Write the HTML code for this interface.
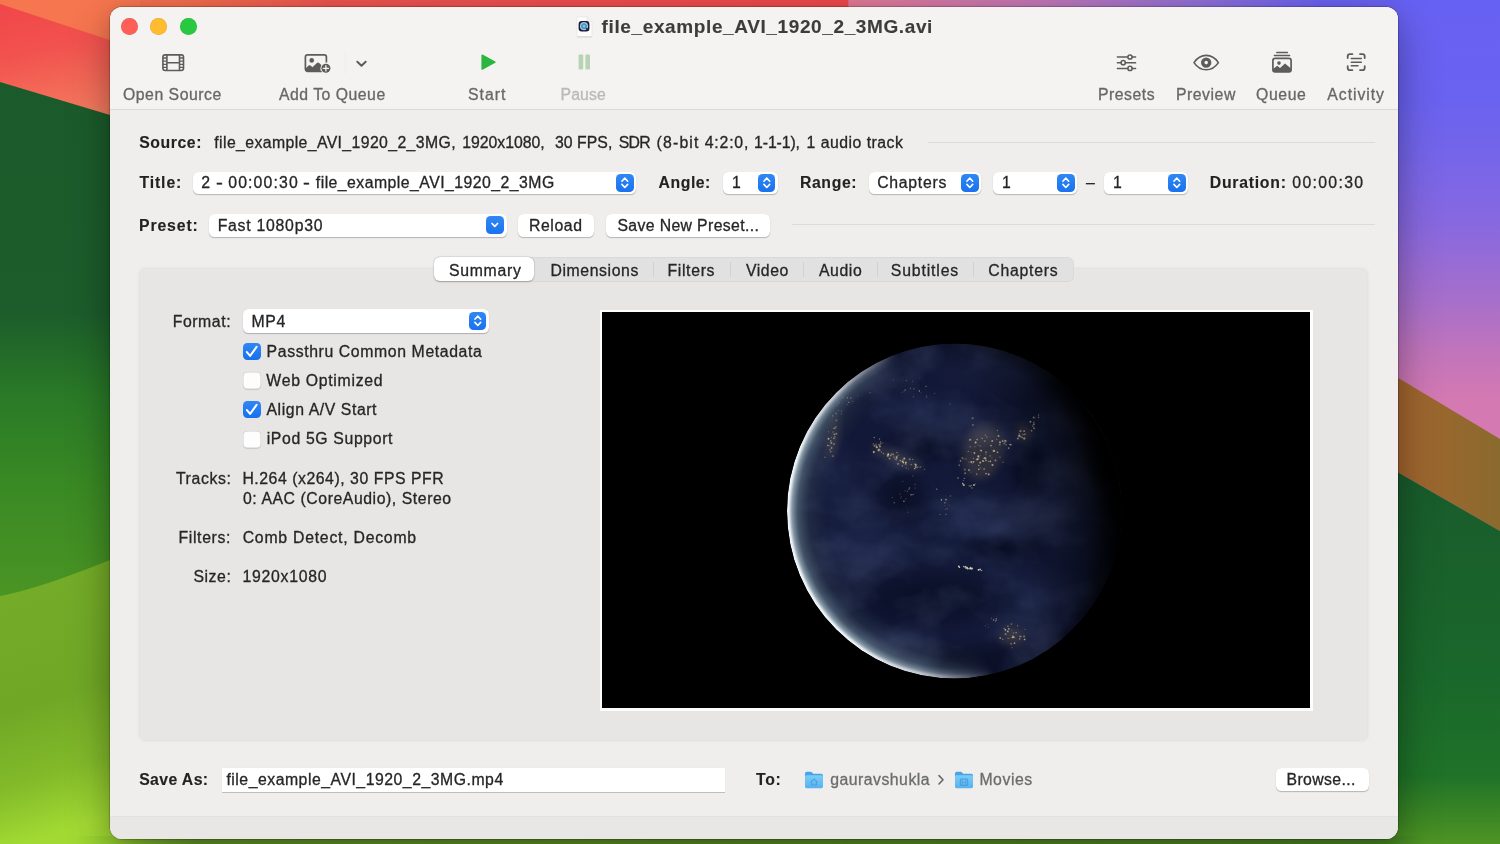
<!DOCTYPE html>
<html><head><meta charset="utf-8"><title>HandBrake</title>
<style>
html,body{margin:0;padding:0;}
body{width:1500px;height:844px;overflow:hidden;position:relative;background:#1b5b2b;font-family:"Liberation Sans", sans-serif;}
.t{position:absolute;white-space:pre;font-size:15.8px;line-height:20px;font-family:"Liberation Sans", sans-serif;-webkit-text-stroke:0.3px currentColor;}
.abs{position:absolute;}

.win{position:absolute;left:110px;top:7px;width:1287.5px;height:831.5px;border-radius:12px;background:#efeeed;overflow:hidden;
 box-shadow:0 0 0 0.5px rgba(0,0,0,.30), 0 18px 44px rgba(0,0,0,.30), 0 2px 22px rgba(0,0,0,.10), 0 0 3px rgba(0,0,0,.12);}
.tbar{position:absolute;left:0;top:0;width:100%;height:102px;background:#f4f3f2;border-bottom:1px solid #dad9d8;}
.bbar{position:absolute;left:0;top:808.5px;width:100%;height:23px;background:#e8e7e6;border-top:1px solid #e2e1e0;}
.tl{position:absolute;top:11.5px;width:17px;height:17px;border-radius:50%;}
.sel{position:absolute;background:#fff;border-radius:5.5px;box-shadow:0 0.8px 1.1px -0.2px rgba(0,0,0,.24),0 0 0.6px rgba(0,0,0,.10);}
.btn{position:absolute;background:#fff;border-radius:5.5px;box-shadow:0 0.8px 1.1px -0.2px rgba(0,0,0,.24),0 0 0.6px rgba(0,0,0,.10);}
.stp{position:absolute;width:17.6px;height:17.6px;border-radius:4.6px;background:linear-gradient(#3088f5,#1a72ee);}
.cb{position:absolute;left:243.2px;width:17.5px;height:17.2px;border-radius:4.4px;}
.cb.on{background:linear-gradient(#3088f5,#1770ee);}
.cb.off{background:#fdfdfd;box-shadow:inset 0 0 0 0.5px rgba(0,0,0,.18),0 0.5px 1px rgba(0,0,0,.12);}
.hl{position:absolute;height:1px;background:#dcdbda;}

</style></head><body>

<svg class="abs" style="left:0;top:0" width="1500" height="844" viewBox="0 0 1500 844">
<defs>
 <linearGradient id="gL" x1="0" y1="0" x2="0" y2="1">
  <stop offset="0" stop-color="#1b5a2b"/><stop offset="0.37" stop-color="#1c5d2b"/>
  <stop offset="0.47" stop-color="#2a7a27"/><stop offset="0.58" stop-color="#3a8a24"/>
  <stop offset="0.70" stop-color="#4a9424"/><stop offset="1" stop-color="#4a9424"/>
 </linearGradient>
 <linearGradient id="gLL" x1="0" y1="0" x2="0.15" y2="1">
  <stop offset="0" stop-color="#76ad29"/><stop offset="0.55" stop-color="#70a826"/><stop offset="0.8" stop-color="#82ba2a"/><stop offset="1" stop-color="#a2da33"/>
 </linearGradient>
 <linearGradient id="gRed" x1="0" y1="0" x2="0.25" y2="1">
  <stop offset="0" stop-color="#f1454a"/><stop offset="0.45" stop-color="#f2524e"/><stop offset="1" stop-color="#f47a5e"/>
 </linearGradient>
 <linearGradient id="gTop" x1="0" y1="0" x2="1" y2="0">
  <stop offset="0" stop-color="#f5744f"/><stop offset="0.12" stop-color="#f3704e"/><stop offset="0.22" stop-color="#ee5550"/>
  <stop offset="0.565" stop-color="#ee494b"/><stop offset="0.566" stop-color="#e47a96"/>
  <stop offset="0.70" stop-color="#c078b8"/><stop offset="0.80" stop-color="#9070d8"/><stop offset="0.88" stop-color="#6a62f0"/><stop offset="1" stop-color="#6a62f0"/>
 </linearGradient>
 <linearGradient id="gR" x1="0" y1="0" x2="0" y2="1">
  <stop offset="0" stop-color="#6761f3"/><stop offset="0.18" stop-color="#6a62f0"/><stop offset="0.27" stop-color="#7465ea"/>
  <stop offset="0.40" stop-color="#8868e0"/><stop offset="0.535" stop-color="#a66fcb"/><stop offset="0.625" stop-color="#c074bb"/><stop offset="0.714" stop-color="#d479b2"/><stop offset="1" stop-color="#d87ab0"/>
 </linearGradient>
 <linearGradient id="gBr" x1="0" y1="0" x2="1" y2="0">
  <stop offset="0" stop-color="#a8642f"/><stop offset="1" stop-color="#8a6a2e"/>
 </linearGradient>
 <linearGradient id="gRG" x1="0" y1="0" x2="0" y2="1">
  <stop offset="0" stop-color="#195b2c"/><stop offset="0.55" stop-color="#1a672b"/><stop offset="0.82" stop-color="#1f7228"/><stop offset="1" stop-color="#4f9423"/>
 </linearGradient>
 <linearGradient id="gBot" x1="0" y1="0" x2="1" y2="0">
  <stop offset="0.05" stop-color="#8fca2e" stop-opacity="0"/><stop offset="0.075" stop-color="#96d030"/><stop offset="0.13" stop-color="#6a9c2a"/>
  <stop offset="0.5" stop-color="#5f9026"/><stop offset="0.9" stop-color="#4f8a26"/><stop offset="0.925" stop-color="#468624"/><stop offset="0.95" stop-color="#438524" stop-opacity="0"/>
 </linearGradient>
 <filter id="b3" x="-10%" y="-10%" width="120%" height="120%"><feGaussianBlur stdDeviation="3"/></filter>
</defs>
<rect width="1500" height="844" fill="#1b5a2b"/>
<!-- left column -->
<rect x="0" y="0" width="140" height="844" fill="url(#gL)"/>
<path d="M0,596 C40,588 80,572 140,548 L140,844 L0,844 Z" fill="url(#gLL)"/>
<!-- top band -->
<rect x="0" y="0" width="1500" height="14" fill="url(#gTop)"/>
<!-- top-left red / orange -->
<polygon points="0,0 140,0 140,124 0,82" fill="url(#gRed)"/>
<polygon points="0,0 140,0 140,50 0,4" fill="#f5764f"/>
<!-- right column -->
<rect x="1380" y="0" width="120" height="560" fill="url(#gR)"/>
<polygon points="1380,367 1500,439 1500,531 1380,462" fill="url(#gBr)"/>
<polygon points="1380,462 1500,531 1500,844 1380,844" fill="url(#gRG)"/>
<!-- bottom band -->
<rect x="0" y="836" width="1500" height="8" fill="url(#gBot)"/>
</svg>


<div class="win">
 <div class="tbar"></div>
 <div class="bbar"></div>
</div>
<div class="tl" style="left:121.2px;top:18px;background:#fe5f57;box-shadow:inset 0 0 0 0.5px rgba(0,0,0,.12)"></div>
<div class="tl" style="left:150.3px;top:18px;background:#febc2e;box-shadow:inset 0 0 0 0.5px rgba(0,0,0,.12)"></div>
<div class="tl" style="left:179.5px;top:18px;background:#28c840;box-shadow:inset 0 0 0 0.5px rgba(0,0,0,.12)"></div>
<svg class="abs" style="left:575.5px;top:15.5px" width="17" height="22" viewBox="0 0 17 22">
<defs><radialGradient id="qt" cx="0.5" cy="0.5" r="0.5"><stop offset="0" stop-color="#c2f0fb"/><stop offset="0.3" stop-color="#5aa3cc"/><stop offset="0.62" stop-color="#4a8dbd"/><stop offset="0.8" stop-color="#a9c9ea"/><stop offset="1" stop-color="#8fb4dc"/></radialGradient></defs>
<path d="M0.9 1.6 Q0.9 0.7 1.8 0.7 H11 L16 5.6 V20 Q16 20.9 15.1 20.9 H1.8 Q0.9 20.9 0.9 20 Z" fill="#fcfcfb" stroke="#e4e3e2" stroke-width="0.7"/>
<path d="M1.2 20.9 H15.8" stroke="#cfcecd" stroke-width="0.9"/>
<path d="M11 0.7 V4.6 Q11 5.6 12 5.6 H16" fill="#f1f0ef" stroke="#e0dfde" stroke-width="0.5"/>
<rect x="2.6" y="4.9" width="10.8" height="10.5" rx="3.2" fill="#1b1a33"/>
<circle cx="8" cy="10.2" r="4.1" fill="url(#qt)"/>
<path d="M10.6 12.8 L12 14.2" stroke="#1b2a3a" stroke-width="1.6" stroke-linecap="round"/>
</svg>

<svg class="abs" style="left:0;top:0;overflow:visible" width="1500" height="120" viewBox="0 0 1500 120">
<!-- film -->
<g fill="none" stroke="#5c5c5c" stroke-width="1.6">
 <rect x="162.9" y="54.9" width="20.6" height="15.6" rx="2.2"/>
 <path d="M166.9 54.9 V70.5 M179.5 54.9 V70.5 M166.9 62.7 H179.5"/>
 <path d="M162.9 58.0 H166.9 M162.9 61.1 H166.9 M162.9 64.3 H166.9 M162.9 67.4 H166.9 M179.5 58.0 H183.5 M179.5 61.1 H183.5 M179.5 64.3 H183.5 M179.5 67.4 H183.5" stroke-width="1.3"/>
</g>
<!-- add to queue: photo + badge -->
<g>
 <path d="M322 71.3 H307.6 A2.2 2.2 0 0 1 305.4 69.1 V57 A2.2 2.2 0 0 1 307.6 54.8 H324.2 A2.2 2.2 0 0 1 326.4 57 V62.6" fill="none" stroke="#5c5c5c" stroke-width="1.7"/>
 <circle cx="311.7" cy="60.4" r="2.3" fill="#5c5c5c"/>
 <path d="M305.6 68.4 L308.6 65.6 Q309.6 64.8 310.6 65.6 L312.4 67.2 L316.9 63.0 Q318 62.1 319.1 63.0 L321.6 65.2 L320.3 71.2 L307.2 71.2 Q305.6 71.2 305.6 69.6 Z" fill="#5c5c5c"/>
 <circle cx="325.9" cy="68.3" r="5.4" fill="#f4f3f2"/>
 <circle cx="325.9" cy="68.3" r="4.5" fill="#5c5c5c"/>
 <path d="M325.9 65.7 V70.9 M323.3 68.3 H328.5" stroke="#f4f3f2" stroke-width="1.3" stroke-linecap="round"/>
</g>
<rect x="344.6" y="52" width="1" height="22" fill="#eeedec"/>
<path d="M357.3 61.8 L361.5 65.8 L365.7 61.8" fill="none" stroke="#5c5c5c" stroke-width="2" stroke-linecap="round" stroke-linejoin="round"/>
<!-- play -->
<path d="M482.2 55.2 L494.9 62.1 L482.2 69.0 Z" fill="#2ab640" stroke="#2ab640" stroke-width="1.6" stroke-linejoin="round"/>
<!-- pause -->
<rect x="578.6" y="54.6" width="4.6" height="15" rx="1" fill="#b7d3b4"/>
<rect x="585.4" y="54.6" width="4.6" height="15" rx="1" fill="#b7d3b4"/>
<!-- presets sliders -->
<g fill="none" stroke="#5c5c5c" stroke-width="1.5" stroke-linecap="round">
 <path d="M1117.4 57 H1127.8 M1132.2 57 H1135.6 M1117.4 62.7 H1121 M1125.4 62.7 H1135.6 M1117.4 68.4 H1127.8 M1132.2 68.4 H1135.6"/>
 <circle cx="1130" cy="57" r="2.1"/><circle cx="1123.2" cy="62.7" r="2.1"/><circle cx="1130" cy="68.4" r="2.1"/>
</g>
<!-- eye -->
<g>
 <path d="M1194 62.6 C1197.5 57.4 1201.6 55.4 1206.2 55.4 C1210.8 55.4 1214.9 57.4 1218.4 62.6 C1214.9 67.8 1210.8 69.8 1206.2 69.8 C1201.6 69.8 1197.5 67.8 1194 62.6 Z" fill="none" stroke="#5c5c5c" stroke-width="1.6" stroke-linejoin="round"/>
 <circle cx="1206.2" cy="62.6" r="3.5" fill="none" stroke="#5c5c5c" stroke-width="3.4"/>
</g>
<!-- queue stack -->
<g>
 <path d="M1276.8 52.6 H1287.4 M1274.4 55.4 H1289.6" stroke="#5c5c5c" stroke-width="1.5" stroke-linecap="round" fill="none"/>
 <rect x="1272.9" y="58.4" width="18.2" height="13.5" rx="2.2" fill="none" stroke="#5c5c5c" stroke-width="1.7"/>
 <circle cx="1279" cy="63.1" r="1.8" fill="#5c5c5c"/>
 <path d="M1273 69 L1277.2 65.8 L1280 68 L1285 63.6 L1291 68.6 L1291 71.8 L1273 71.8 Z" fill="#5c5c5c"/>
</g>
<!-- activity: text viewfinder -->
<g fill="none" stroke="#5c5c5c" stroke-width="1.8" stroke-linecap="round">
 <path d="M1347.7 58 V56.3 A2.2 2.2 0 0 1 1349.9 54.1 H1352.4 M1360 54.1 H1362.5 A2.2 2.2 0 0 1 1364.7 56.3 V58 M1364.7 66.2 V67.9 A2.2 2.2 0 0 1 1362.5 70.1 H1360 M1352.4 70.1 H1349.9 A2.2 2.2 0 0 1 1347.7 67.9 V66.2"/>
 <path d="M1351.3 58.6 H1361.3 M1351.3 62.2 H1361.3 M1351.3 65.8 H1358" stroke-width="1.5"/>
</g>
</svg>

<!-- separators -->
<div class="hl" style="left:928px;top:142px;width:447px"></div>
<div class="hl" style="left:792px;top:224px;width:583px"></div>
<!-- row 2 controls -->
<div class="sel" style="left:193px;top:171.5px;width:443px;height:22.5px"></div><div class="stp" style="left:616.2px;top:174px"><svg width="17.6" height="17.6" viewBox="0 0 17.6 17.6" style="display:block"><path d="M5.9 7.2 L8.8 4.1 L11.7 7.2 M5.9 10.4 L8.8 13.5 L11.7 10.4" fill="none" stroke="#fff" stroke-width="1.6" stroke-linecap="round" stroke-linejoin="round"/></svg></div>
<div class="sel" style="left:723px;top:171.5px;width:55px;height:22.5px"></div><div class="stp" style="left:757.8px;top:174px"><svg width="17.6" height="17.6" viewBox="0 0 17.6 17.6" style="display:block"><path d="M5.9 7.2 L8.8 4.1 L11.7 7.2 M5.9 10.4 L8.8 13.5 L11.7 10.4" fill="none" stroke="#fff" stroke-width="1.6" stroke-linecap="round" stroke-linejoin="round"/></svg></div>
<div class="sel" style="left:869px;top:171.5px;width:111.5px;height:22.5px"></div><div class="stp" style="left:961.2px;top:174px"><svg width="17.6" height="17.6" viewBox="0 0 17.6 17.6" style="display:block"><path d="M5.9 7.2 L8.8 4.1 L11.7 7.2 M5.9 10.4 L8.8 13.5 L11.7 10.4" fill="none" stroke="#fff" stroke-width="1.6" stroke-linecap="round" stroke-linejoin="round"/></svg></div>
<div class="sel" style="left:993px;top:171.5px;width:84px;height:22.5px"></div><div class="stp" style="left:1057.2px;top:174px"><svg width="17.6" height="17.6" viewBox="0 0 17.6 17.6" style="display:block"><path d="M5.9 7.2 L8.8 4.1 L11.7 7.2 M5.9 10.4 L8.8 13.5 L11.7 10.4" fill="none" stroke="#fff" stroke-width="1.6" stroke-linecap="round" stroke-linejoin="round"/></svg></div>
<div class="sel" style="left:1104px;top:171.5px;width:83.5px;height:22.5px"></div><div class="stp" style="left:1168.2px;top:174px"><svg width="17.6" height="17.6" viewBox="0 0 17.6 17.6" style="display:block"><path d="M5.9 7.2 L8.8 4.1 L11.7 7.2 M5.9 10.4 L8.8 13.5 L11.7 10.4" fill="none" stroke="#fff" stroke-width="1.6" stroke-linecap="round" stroke-linejoin="round"/></svg></div>
<!-- row 3 controls -->
<div class="sel" style="left:209px;top:213.5px;width:297.5px;height:23px"></div><div class="stp" style="left:486.2px;top:216.2px"><svg width="17.6" height="17.6" viewBox="0 0 17.6 17.6" style="display:block"><path d="M6 7.5 L8.8 10.3 L11.6 7.5" fill="none" stroke="#fff" stroke-width="1.7" stroke-linecap="round" stroke-linejoin="round"/></svg></div>
<div class="btn" style="left:518px;top:213.5px;width:75.5px;height:23px"></div>
<div class="btn" style="left:606px;top:213.5px;width:163.5px;height:23px"></div>
<!-- tab box -->
<div class="abs" style="left:139px;top:268px;width:1229px;height:473px;border-radius:7px;background:#e7e6e5;box-shadow:0 0 2.5px 0.5px #e8e7e6, inset 0 0 0 1px rgba(0,0,0,.012)"></div>
<!-- segmented control -->
<div class="abs" style="left:433.5px;top:256.5px;width:640px;height:25.5px;border-radius:7px;background:#e2e1e1;box-shadow:inset 0 0 0 0.5px rgba(0,0,0,.07)"></div>
<div class="abs" style="left:434.3px;top:257.2px;width:100.2px;height:24px;border-radius:6px;background:#fff;box-shadow:0 0.5px 1.8px rgba(0,0,0,.26),0 0 0 0.5px rgba(0,0,0,.06)"></div>
<div class="abs" style="left:653px;top:262px;width:1px;height:15px;background:#d2d1d1"></div>
<div class="abs" style="left:730px;top:262px;width:1px;height:15px;background:#d2d1d1"></div>
<div class="abs" style="left:803px;top:262px;width:1px;height:15px;background:#d2d1d1"></div>
<div class="abs" style="left:876.5px;top:262px;width:1px;height:15px;background:#d2d1d1"></div>
<div class="abs" style="left:973px;top:262px;width:1px;height:15px;background:#d2d1d1"></div>
<!-- format -->
<div class="sel" style="left:243px;top:309px;width:246px;height:23.5px"></div><div class="stp" style="left:468.6px;top:312.2px"><svg width="17.6" height="17.6" viewBox="0 0 17.6 17.6" style="display:block"><path d="M5.9 7.2 L8.8 4.1 L11.7 7.2 M5.9 10.4 L8.8 13.5 L11.7 10.4" fill="none" stroke="#fff" stroke-width="1.6" stroke-linecap="round" stroke-linejoin="round"/></svg></div>
<div class="cb on" style="top:343px"><svg width="17.5" height="17.2" viewBox="0 0 17.5 17.2" style="display:block"><path d="M3.9 9.1 L7.1 12.9 L13.6 3.9" fill="none" stroke="#fff" stroke-width="2" stroke-linecap="round" stroke-linejoin="round"/></svg></div><div class="cb off" style="top:372.2px"></div><div class="cb on" style="top:401.3px"><svg width="17.5" height="17.2" viewBox="0 0 17.5 17.2" style="display:block"><path d="M3.9 9.1 L7.1 12.9 L13.6 3.9" fill="none" stroke="#fff" stroke-width="2" stroke-linecap="round" stroke-linejoin="round"/></svg></div><div class="cb off" style="top:430.5px"></div>
<!-- preview -->
<div class="abs" style="left:599.5px;top:309.5px;width:713px;height:401.5px;background:#fdfdfd"></div>

<svg class="abs" style="left:602px;top:312px" width="708" height="396" viewBox="602 312 708 396">
<defs>
 <radialGradient id="eBase" cx="954.4" cy="511.0" r="167.4" gradientUnits="userSpaceOnUse">
  <stop offset="0" stop-color="#131a39"/><stop offset="0.75" stop-color="#121837"/><stop offset="1" stop-color="#0e132c"/>
 </radialGradient>
 <radialGradient id="eAtm" cx="954.4" cy="511.0" r="167.4" gradientUnits="userSpaceOnUse">
  <stop offset="0.76" stop-color="#5a6f80" stop-opacity="0"/>
  <stop offset="0.87" stop-color="#5a6f80" stop-opacity="0.22"/>
  <stop offset="0.935" stop-color="#6c8494" stop-opacity="0.55"/>
  <stop offset="0.97" stop-color="#9fb3bf" stop-opacity="0.85"/>
  <stop offset="0.987" stop-color="#e4ebee" stop-opacity="1"/>
  <stop offset="1" stop-color="#ffffff" stop-opacity="1"/>
 </radialGradient>
 <linearGradient id="eAtmMask" x1="946.4" y1="513.4" x2="793.9" y2="558.5" gradientUnits="userSpaceOnUse">
  <stop offset="0" stop-color="#fff" stop-opacity="0"/><stop offset="0.18" stop-color="#fff" stop-opacity="0.35"/>
  <stop offset="0.45" stop-color="#fff" stop-opacity="0.8"/><stop offset="0.8" stop-color="#fff" stop-opacity="1"/>
 </linearGradient>
 <mask id="mAtm" maskUnits="userSpaceOnUse" x="602" y="312" width="708" height="396"><rect x="602" y="312" width="708" height="396" fill="url(#eAtmMask)"/></mask>
 <linearGradient id="eShade" x1="962.4" y1="508.6" x2="1114.9" y2="463.5" gradientUnits="userSpaceOnUse">
  <stop offset="0" stop-color="#000" stop-opacity="0"/><stop offset="0.26" stop-color="#000" stop-opacity="0.06"/>
  <stop offset="0.58" stop-color="#000" stop-opacity="0.32"/><stop offset="0.79" stop-color="#000" stop-opacity="0.64"/><stop offset="0.916" stop-color="#000" stop-opacity="0.92"/><stop offset="1" stop-color="#000" stop-opacity="1"/>
 </linearGradient>
 <radialGradient id="cloudG"><stop offset="0" stop-color="#27335c" stop-opacity="0.34"/><stop offset="0.5" stop-color="#263158" stop-opacity="0.20"/><stop offset="1" stop-color="#252f55" stop-opacity="0"/></radialGradient>
 <radialGradient id="darkG"><stop offset="0" stop-color="#080d22" stop-opacity="0.85"/><stop offset="0.55" stop-color="#090e24" stop-opacity="0.5"/><stop offset="1" stop-color="#0a0f26" stop-opacity="0"/></radialGradient>
 <filter id="turb" x="0" y="0" width="100%" height="100%"><feTurbulence type="fractalNoise" baseFrequency="0.016 0.022" numOctaves="4" seed="11"/><feColorMatrix type="matrix" values="0 0 0 0 0.16  0 0 0 0 0.21  0 0 0 0 0.39  2.4 0 0 0 -0.95"/></filter>
 <radialGradient id="eLimb" cx="914.3" cy="522.9" r="209.2" gradientUnits="userSpaceOnUse"><stop offset="0.86" stop-color="#000" stop-opacity="0"/><stop offset="0.96" stop-color="#000" stop-opacity="0.5"/><stop offset="1" stop-color="#000" stop-opacity="1"/></radialGradient>
 <clipPath id="cE"><circle cx="954.4" cy="511.0" r="167.4"/></clipPath>
 <filter id="fb8" x="-30%" y="-30%" width="160%" height="160%"><feGaussianBlur stdDeviation="7"/></filter>
 <filter id="fb5" x="-30%" y="-30%" width="160%" height="160%"><feGaussianBlur stdDeviation="4"/></filter>
 <filter id="fb1" x="-50%" y="-50%" width="200%" height="200%"><feGaussianBlur stdDeviation="0.7"/></filter>
 <filter id="fb3" x="-50%" y="-50%" width="200%" height="200%"><feGaussianBlur stdDeviation="3"/></filter>
</defs>
<rect x="602" y="312" width="708" height="396" fill="#000"/>
<g clip-path="url(#cE)">
 <circle cx="954.4" cy="511.0" r="167.4" fill="url(#eBase)"/>
 <g fill="url(#cloudG)">
  <ellipse cx="1000" cy="370" rx="95" ry="34"/>
  <ellipse cx="1070" cy="425" rx="50" ry="42"/>
  <ellipse cx="1070" cy="508" rx="62" ry="60"/>
  <ellipse cx="972" cy="522" rx="58" ry="44"/>
  <ellipse cx="866" cy="532" rx="68" ry="52"/>
  <ellipse cx="836" cy="478" rx="34" ry="46"/>
  <ellipse cx="925" cy="410" rx="66" ry="24"/>
  <ellipse cx="1030" cy="588" rx="58" ry="30"/>
  <ellipse cx="880" cy="642" rx="66" ry="20"/>
  <ellipse cx="1022" cy="615" rx="56" ry="40"/>
  <ellipse cx="1078" cy="495" rx="36" ry="30"/>
  <ellipse cx="985" cy="530" rx="30" ry="22"/>
  <ellipse cx="858" cy="548" rx="44" ry="22"/>
  <ellipse cx="1040" cy="370" rx="44" ry="16"/>
 </g>
 <g fill="url(#darkG)">
  <ellipse cx="930" cy="598" rx="100" ry="36"/>
  <ellipse cx="925" cy="446" rx="50" ry="22"/>
  <ellipse cx="1030" cy="468" rx="24" ry="34"/>
  <ellipse cx="900" cy="498" rx="34" ry="36"/>
  <ellipse cx="960" cy="662" rx="95" ry="22"/>
  <ellipse cx="1000" cy="548" rx="56" ry="16"/>
 </g>
 <rect x="780" y="340" width="350" height="345" filter="url(#turb)" opacity="0.20"/>
 <g filter="url(#fb5)" fill="#b39a6c" opacity="0.20"><ellipse cx="983" cy="452" rx="20" ry="28" transform="rotate(15 983 452)"/><ellipse cx="897" cy="458" rx="28" ry="5" transform="rotate(24 897 458)"/><ellipse cx="833" cy="436" rx="5" ry="24" transform="rotate(8 833 436)"/><ellipse cx="1024" cy="432" rx="7" ry="10"/><ellipse cx="1012" cy="636" rx="12" ry="10"/></g>
 <g filter="url(#fb1)"><circle cx="978.8" cy="458.0" r="0.89" fill="#e8d09a" opacity="0.29"/><circle cx="974.9" cy="446.8" r="0.53" fill="#e8d09a" opacity="0.55"/><circle cx="992.0" cy="457.9" r="0.54" fill="#e8d09a" opacity="0.30"/><circle cx="964.1" cy="458.9" r="0.57" fill="#e8d09a" opacity="0.38"/><circle cx="972.9" cy="424.9" r="0.85" fill="#e8d09a" opacity="0.49"/><circle cx="986.1" cy="452.2" r="1.02" fill="#e8d09a" opacity="0.42"/><circle cx="984.6" cy="457.9" r="0.69" fill="#e8d09a" opacity="0.74"/><circle cx="984.1" cy="469.0" r="0.88" fill="#e8d09a" opacity="0.47"/><circle cx="980.1" cy="449.7" r="0.54" fill="#e8d09a" opacity="0.37"/><circle cx="982.1" cy="438.4" r="0.69" fill="#e8d09a" opacity="0.60"/><circle cx="974.4" cy="453.1" r="0.98" fill="#e8d09a" opacity="0.67"/><circle cx="978.9" cy="469.2" r="0.82" fill="#e8d09a" opacity="0.78"/><circle cx="984.8" cy="441.1" r="1.09" fill="#e8d09a" opacity="0.32"/><circle cx="966.1" cy="459.0" r="0.59" fill="#e8d09a" opacity="0.54"/><circle cx="995.5" cy="460.4" r="0.96" fill="#e8d09a" opacity="0.59"/><circle cx="991.0" cy="445.6" r="0.92" fill="#e8d09a" opacity="0.61"/><circle cx="975.6" cy="442.6" r="1.00" fill="#e8d09a" opacity="0.82"/><circle cx="968.2" cy="451.4" r="0.54" fill="#e8d09a" opacity="0.67"/><circle cx="972.6" cy="418.2" r="0.99" fill="#e8d09a" opacity="0.42"/><circle cx="968.9" cy="461.9" r="0.51" fill="#e8d09a" opacity="0.53"/><circle cx="983.8" cy="458.3" r="0.54" fill="#e8d09a" opacity="0.71"/><circle cx="986.0" cy="460.5" r="0.73" fill="#e8d09a" opacity="0.77"/><circle cx="990.3" cy="461.4" r="0.83" fill="#e8d09a" opacity="0.78"/><circle cx="997.4" cy="430.5" r="0.67" fill="#e8d09a" opacity="0.50"/><circle cx="964.8" cy="469.6" r="1.07" fill="#e8d09a" opacity="0.34"/><circle cx="983.8" cy="461.3" r="0.64" fill="#e8d09a" opacity="0.54"/><circle cx="978.1" cy="444.9" r="0.50" fill="#e8d09a" opacity="0.50"/><circle cx="971.3" cy="462.1" r="1.07" fill="#e8d09a" opacity="0.66"/><circle cx="970.3" cy="446.7" r="0.91" fill="#e8d09a" opacity="0.28"/><circle cx="1000.0" cy="442.2" r="1.02" fill="#e8d09a" opacity="0.73"/><circle cx="973.3" cy="458.2" r="0.56" fill="#e8d09a" opacity="0.63"/><circle cx="985.8" cy="454.7" r="0.63" fill="#e8d09a" opacity="0.35"/><circle cx="980.3" cy="455.2" r="0.50" fill="#e8d09a" opacity="0.34"/><circle cx="988.3" cy="461.3" r="0.52" fill="#e8d09a" opacity="0.77"/><circle cx="980.2" cy="446.0" r="0.65" fill="#e8d09a" opacity="0.46"/><circle cx="978.4" cy="456.2" r="1.01" fill="#e8d09a" opacity="0.85"/><circle cx="971.4" cy="452.3" r="0.55" fill="#e8d09a" opacity="0.31"/><circle cx="976.6" cy="459.4" r="1.00" fill="#e8d09a" opacity="0.35"/><circle cx="1003.0" cy="462.3" r="0.82" fill="#e8d09a" opacity="0.34"/><circle cx="981.1" cy="450.6" r="0.82" fill="#e8d09a" opacity="0.84"/><circle cx="996.7" cy="439.3" r="0.66" fill="#e8d09a" opacity="0.47"/><circle cx="986.0" cy="473.6" r="0.82" fill="#e8d09a" opacity="0.72"/><circle cx="977.6" cy="459.3" r="0.99" fill="#e8d09a" opacity="0.84"/><circle cx="998.5" cy="435.9" r="0.99" fill="#e8d09a" opacity="0.69"/><circle cx="980.5" cy="468.0" r="0.71" fill="#e8d09a" opacity="0.27"/><circle cx="990.1" cy="455.9" r="0.66" fill="#e8d09a" opacity="0.67"/><circle cx="994.1" cy="450.9" r="1.06" fill="#e8d09a" opacity="0.84"/><circle cx="992.7" cy="450.9" r="0.63" fill="#e8d09a" opacity="0.39"/><circle cx="982.9" cy="460.9" r="0.87" fill="#e8d09a" opacity="0.79"/><circle cx="992.2" cy="441.0" r="0.89" fill="#e8d09a" opacity="0.73"/><circle cx="992.5" cy="465.0" r="1.05" fill="#e8d09a" opacity="0.72"/><circle cx="987.0" cy="437.1" r="0.61" fill="#e8d09a" opacity="0.72"/><circle cx="969.0" cy="470.1" r="1.08" fill="#e8d09a" opacity="0.49"/><circle cx="959.2" cy="465.3" r="0.93" fill="#e8d09a" opacity="0.35"/><circle cx="985.4" cy="458.4" r="1.04" fill="#e8d09a" opacity="0.73"/><circle cx="988.7" cy="474.3" r="1.09" fill="#e8d09a" opacity="0.64"/><circle cx="972.3" cy="463.4" r="0.58" fill="#e8d09a" opacity="0.26"/><circle cx="997.5" cy="452.2" r="0.82" fill="#e8d09a" opacity="0.81"/><circle cx="962.4" cy="457.9" r="1.00" fill="#e8d09a" opacity="0.38"/><circle cx="980.0" cy="462.8" r="0.64" fill="#e8d09a" opacity="0.60"/><circle cx="978.8" cy="465.4" r="0.58" fill="#e8d09a" opacity="0.80"/><circle cx="973.5" cy="461.8" r="0.85" fill="#e8d09a" opacity="0.79"/><circle cx="960.5" cy="460.9" r="0.80" fill="#e8d09a" opacity="0.57"/><circle cx="981.3" cy="451.1" r="0.76" fill="#e8d09a" opacity="0.36"/><circle cx="1000.0" cy="457.2" r="0.60" fill="#e8d09a" opacity="0.53"/><circle cx="985.5" cy="435.1" r="0.70" fill="#e8d09a" opacity="0.56"/><circle cx="969.3" cy="440.0" r="0.56" fill="#e8d09a" opacity="0.59"/><circle cx="980.3" cy="462.5" r="0.96" fill="#e8d09a" opacity="0.55"/><circle cx="970.3" cy="439.7" r="1.05" fill="#e8d09a" opacity="0.52"/><circle cx="977.1" cy="439.6" r="0.81" fill="#e8d09a" opacity="0.67"/><circle cx="962.7" cy="483.6" r="0.79" fill="#e8d09a" opacity="0.81"/><circle cx="965.1" cy="473.3" r="1.07" fill="#e8d09a" opacity="0.41"/><circle cx="958.0" cy="478.1" r="1.00" fill="#e8d09a" opacity="0.33"/><circle cx="971.5" cy="485.4" r="0.54" fill="#e8d09a" opacity="0.39"/><circle cx="974.0" cy="485.0" r="0.97" fill="#e8d09a" opacity="0.79"/><circle cx="972.0" cy="487.9" r="0.90" fill="#e8d09a" opacity="0.34"/><circle cx="976.7" cy="474.1" r="0.63" fill="#e8d09a" opacity="0.82"/><circle cx="963.8" cy="485.1" r="1.09" fill="#e8d09a" opacity="0.75"/><circle cx="970.5" cy="486.1" r="0.81" fill="#e8d09a" opacity="0.45"/><circle cx="969.3" cy="485.7" r="0.93" fill="#e8d09a" opacity="0.26"/><circle cx="963.4" cy="480.4" r="0.51" fill="#e8d09a" opacity="0.45"/><circle cx="964.2" cy="478.2" r="0.54" fill="#e8d09a" opacity="0.84"/><circle cx="970.9" cy="472.0" r="0.56" fill="#e8d09a" opacity="0.41"/><circle cx="975.6" cy="483.9" r="0.66" fill="#e8d09a" opacity="0.33"/><circle cx="999.8" cy="444.6" r="0.99" fill="#e8d09a" opacity="0.41"/><circle cx="1008.6" cy="448.1" r="0.84" fill="#e8d09a" opacity="0.67"/><circle cx="1005.8" cy="440.8" r="0.91" fill="#e8d09a" opacity="0.51"/><circle cx="1010.7" cy="444.7" r="0.88" fill="#e8d09a" opacity="0.73"/><circle cx="1009.6" cy="444.5" r="0.54" fill="#e8d09a" opacity="0.77"/><circle cx="1002.6" cy="441.2" r="0.83" fill="#e8d09a" opacity="0.81"/><circle cx="1004.8" cy="442.4" r="0.82" fill="#e8d09a" opacity="0.39"/><circle cx="1006.2" cy="441.7" r="0.53" fill="#e8d09a" opacity="0.37"/><circle cx="1004.1" cy="443.6" r="0.96" fill="#e8d09a" opacity="0.42"/><circle cx="1003.3" cy="440.0" r="0.71" fill="#e8d09a" opacity="0.26"/><circle cx="1005.0" cy="440.8" r="0.94" fill="#e8d09a" opacity="0.58"/><circle cx="1006.1" cy="444.7" r="1.06" fill="#e8d09a" opacity="0.31"/><circle cx="1024.1" cy="431.1" r="0.95" fill="#e8d09a" opacity="0.75"/><circle cx="1019.1" cy="435.8" r="1.08" fill="#e8d09a" opacity="0.84"/><circle cx="1017.9" cy="438.5" r="1.09" fill="#e8d09a" opacity="0.63"/><circle cx="1019.7" cy="435.2" r="0.64" fill="#e8d09a" opacity="0.33"/><circle cx="1024.3" cy="437.5" r="0.78" fill="#e8d09a" opacity="0.35"/><circle cx="1024.3" cy="438.6" r="1.21" fill="#e8d09a" opacity="0.65"/><circle cx="1020.8" cy="436.4" r="0.81" fill="#e8d09a" opacity="0.53"/><circle cx="1022.1" cy="437.5" r="0.78" fill="#e8d09a" opacity="0.83"/><circle cx="1024.9" cy="434.2" r="0.77" fill="#e8d09a" opacity="0.83"/><circle cx="1020.2" cy="436.7" r="0.60" fill="#e8d09a" opacity="0.48"/><circle cx="1019.3" cy="433.7" r="0.74" fill="#e8d09a" opacity="0.55"/><circle cx="1023.6" cy="434.7" r="0.66" fill="#e8d09a" opacity="0.49"/><circle cx="1022.4" cy="434.3" r="0.81" fill="#e8d09a" opacity="0.39"/><circle cx="1020.5" cy="431.1" r="1.13" fill="#e8d09a" opacity="0.64"/><circle cx="1038.6" cy="414.7" r="0.73" fill="#e8d09a" opacity="0.45"/><circle cx="1034.0" cy="424.3" r="0.93" fill="#e8d09a" opacity="0.64"/><circle cx="1034.1" cy="428.2" r="1.04" fill="#e8d09a" opacity="0.63"/><circle cx="1038.4" cy="415.8" r="0.58" fill="#e8d09a" opacity="0.56"/><circle cx="1030.4" cy="421.8" r="0.98" fill="#e8d09a" opacity="0.75"/><circle cx="1033.6" cy="417.4" r="0.91" fill="#e8d09a" opacity="0.67"/><circle cx="1032.3" cy="425.1" r="0.58" fill="#e8d09a" opacity="0.47"/><circle cx="1031.6" cy="430.7" r="0.84" fill="#e8d09a" opacity="0.63"/><circle cx="1034.8" cy="418.1" r="0.79" fill="#e8d09a" opacity="0.25"/><circle cx="1038.6" cy="417.5" r="0.80" fill="#e8d09a" opacity="0.57"/><circle cx="1033.7" cy="422.4" r="0.94" fill="#e8d09a" opacity="0.40"/><circle cx="1032.9" cy="426.3" r="0.94" fill="#e8d09a" opacity="0.37"/><circle cx="896.9" cy="452.5" r="0.80" fill="#e8d09a" opacity="0.48"/><circle cx="878.3" cy="450.2" r="0.96" fill="#e8d09a" opacity="0.62"/><circle cx="894.2" cy="456.0" r="0.59" fill="#e8d09a" opacity="0.40"/><circle cx="897.3" cy="456.1" r="0.84" fill="#e8d09a" opacity="0.26"/><circle cx="905.8" cy="462.6" r="0.90" fill="#e8d09a" opacity="0.67"/><circle cx="893.1" cy="454.4" r="0.81" fill="#e8d09a" opacity="0.53"/><circle cx="890.8" cy="455.5" r="1.04" fill="#e8d09a" opacity="0.37"/><circle cx="924.7" cy="469.5" r="0.51" fill="#e8d09a" opacity="0.53"/><circle cx="912.8" cy="459.6" r="0.77" fill="#e8d09a" opacity="0.41"/><circle cx="902.4" cy="465.9" r="0.63" fill="#e8d09a" opacity="0.60"/><circle cx="905.6" cy="464.2" r="1.07" fill="#e8d09a" opacity="0.33"/><circle cx="904.3" cy="458.6" r="1.03" fill="#e8d09a" opacity="0.67"/><circle cx="898.1" cy="463.7" r="0.79" fill="#e8d09a" opacity="0.26"/><circle cx="911.3" cy="464.4" r="0.77" fill="#e8d09a" opacity="0.43"/><circle cx="903.5" cy="462.7" r="0.69" fill="#e8d09a" opacity="0.75"/><circle cx="917.5" cy="467.2" r="1.00" fill="#e8d09a" opacity="0.32"/><circle cx="915.1" cy="464.3" r="1.04" fill="#e8d09a" opacity="0.42"/><circle cx="887.8" cy="455.7" r="1.10" fill="#e8d09a" opacity="0.60"/><circle cx="887.9" cy="455.9" r="0.67" fill="#e8d09a" opacity="0.28"/><circle cx="914.7" cy="468.7" r="0.67" fill="#e8d09a" opacity="0.81"/><circle cx="896.3" cy="459.6" r="0.81" fill="#e8d09a" opacity="0.36"/><circle cx="873.8" cy="452.1" r="1.03" fill="#e8d09a" opacity="0.74"/><circle cx="879.9" cy="446.4" r="1.06" fill="#e8d09a" opacity="0.58"/><circle cx="896.5" cy="457.0" r="0.94" fill="#e8d09a" opacity="0.52"/><circle cx="898.6" cy="455.2" r="0.67" fill="#e8d09a" opacity="0.28"/><circle cx="903.0" cy="460.1" r="0.78" fill="#e8d09a" opacity="0.46"/><circle cx="889.6" cy="458.6" r="1.09" fill="#e8d09a" opacity="0.41"/><circle cx="891.8" cy="454.0" r="0.83" fill="#e8d09a" opacity="0.49"/><circle cx="900.2" cy="460.7" r="0.62" fill="#e8d09a" opacity="0.79"/><circle cx="888.3" cy="454.2" r="1.04" fill="#e8d09a" opacity="0.85"/><circle cx="890.4" cy="455.5" r="0.62" fill="#e8d09a" opacity="0.30"/><circle cx="893.7" cy="457.4" r="0.64" fill="#e8d09a" opacity="0.41"/><circle cx="874.5" cy="445.8" r="0.95" fill="#e8d09a" opacity="0.50"/><circle cx="883.5" cy="453.6" r="0.73" fill="#e8d09a" opacity="0.45"/><circle cx="905.9" cy="462.7" r="1.08" fill="#e8d09a" opacity="0.33"/><circle cx="879.6" cy="450.2" r="1.02" fill="#e8d09a" opacity="0.38"/><circle cx="895.1" cy="459.0" r="0.74" fill="#e8d09a" opacity="0.52"/><circle cx="920.5" cy="467.1" r="1.02" fill="#e8d09a" opacity="0.26"/><circle cx="915.7" cy="467.1" r="1.04" fill="#e8d09a" opacity="0.53"/><circle cx="896.8" cy="457.9" r="0.73" fill="#e8d09a" opacity="0.81"/><circle cx="909.7" cy="459.3" r="1.08" fill="#e8d09a" opacity="0.40"/><circle cx="902.2" cy="461.2" r="0.81" fill="#e8d09a" opacity="0.66"/><circle cx="915.9" cy="465.0" r="0.89" fill="#e8d09a" opacity="0.71"/><circle cx="881.6" cy="452.0" r="0.52" fill="#e8d09a" opacity="0.72"/><circle cx="898.0" cy="463.9" r="0.89" fill="#e8d09a" opacity="0.43"/><circle cx="903.0" cy="462.0" r="0.88" fill="#e8d09a" opacity="0.67"/><circle cx="878.9" cy="444.8" r="0.81" fill="#e8d09a" opacity="0.60"/><circle cx="876.3" cy="445.4" r="0.86" fill="#e8d09a" opacity="0.26"/><circle cx="876.9" cy="447.3" r="1.08" fill="#e8d09a" opacity="0.64"/><circle cx="880.7" cy="441.6" r="0.64" fill="#e8d09a" opacity="0.40"/><circle cx="882.8" cy="442.8" r="0.68" fill="#e8d09a" opacity="0.26"/><circle cx="873.3" cy="444.1" r="0.75" fill="#e8d09a" opacity="0.40"/><circle cx="874.4" cy="437.8" r="0.64" fill="#e8d09a" opacity="0.27"/><circle cx="876.3" cy="446.8" r="0.91" fill="#e8d09a" opacity="0.37"/><circle cx="879.5" cy="439.1" r="0.80" fill="#e8d09a" opacity="0.37"/><circle cx="880.7" cy="443.5" r="0.99" fill="#e8d09a" opacity="0.39"/><circle cx="879.0" cy="449.2" r="0.68" fill="#e8d09a" opacity="0.82"/><circle cx="876.0" cy="444.1" r="0.63" fill="#e8d09a" opacity="0.50"/><circle cx="874.1" cy="437.4" r="0.59" fill="#e8d09a" opacity="0.49"/><circle cx="880.0" cy="451.0" r="0.59" fill="#e8d09a" opacity="0.28"/><circle cx="911.0" cy="494.8" r="0.76" fill="#e8d09a" opacity="0.55"/><circle cx="906.2" cy="467.9" r="0.77" fill="#e8d09a" opacity="0.33"/><circle cx="907.8" cy="512.2" r="0.70" fill="#e8d09a" opacity="0.21"/><circle cx="902.9" cy="481.2" r="0.55" fill="#e8d09a" opacity="0.33"/><circle cx="905.1" cy="490.7" r="0.51" fill="#e8d09a" opacity="0.34"/><circle cx="908.7" cy="489.2" r="0.79" fill="#e8d09a" opacity="0.28"/><circle cx="894.3" cy="502.7" r="0.73" fill="#e8d09a" opacity="0.37"/><circle cx="912.1" cy="494.7" r="0.55" fill="#e8d09a" opacity="0.57"/><circle cx="905.8" cy="499.1" r="0.76" fill="#e8d09a" opacity="0.21"/><circle cx="892.4" cy="497.5" r="0.71" fill="#e8d09a" opacity="0.22"/><circle cx="907.4" cy="491.2" r="0.77" fill="#e8d09a" opacity="0.30"/><circle cx="908.4" cy="469.1" r="0.54" fill="#e8d09a" opacity="0.31"/><circle cx="915.1" cy="488.1" r="0.50" fill="#e8d09a" opacity="0.49"/><circle cx="901.4" cy="496.7" r="0.40" fill="#e8d09a" opacity="0.50"/><circle cx="914.9" cy="484.6" r="0.78" fill="#e8d09a" opacity="0.21"/><circle cx="903.9" cy="501.2" r="0.78" fill="#e8d09a" opacity="0.58"/><circle cx="900.1" cy="494.1" r="0.57" fill="#e8d09a" opacity="0.40"/><circle cx="909.5" cy="488.0" r="0.72" fill="#e8d09a" opacity="0.50"/><circle cx="913.0" cy="475.9" r="0.64" fill="#e8d09a" opacity="0.33"/><circle cx="900.7" cy="497.9" r="0.71" fill="#e8d09a" opacity="0.23"/><circle cx="906.1" cy="506.1" r="0.50" fill="#e8d09a" opacity="0.23"/><circle cx="913.3" cy="494.2" r="0.53" fill="#e8d09a" opacity="0.59"/><circle cx="841.2" cy="413.7" r="0.66" fill="#e8d09a" opacity="0.30"/><circle cx="834.1" cy="444.1" r="0.93" fill="#e8d09a" opacity="0.52"/><circle cx="831.5" cy="448.0" r="0.87" fill="#e8d09a" opacity="0.65"/><circle cx="836.1" cy="413.5" r="0.90" fill="#e8d09a" opacity="0.32"/><circle cx="835.1" cy="428.0" r="0.84" fill="#e8d09a" opacity="0.47"/><circle cx="834.0" cy="428.3" r="0.65" fill="#e8d09a" opacity="0.40"/><circle cx="832.9" cy="456.1" r="0.85" fill="#e8d09a" opacity="0.45"/><circle cx="825.0" cy="457.3" r="0.80" fill="#e8d09a" opacity="0.39"/><circle cx="836.4" cy="420.4" r="1.09" fill="#e8d09a" opacity="0.31"/><circle cx="828.5" cy="438.8" r="1.00" fill="#e8d09a" opacity="0.80"/><circle cx="834.5" cy="438.7" r="0.57" fill="#e8d09a" opacity="0.36"/><circle cx="836.3" cy="433.8" r="1.06" fill="#e8d09a" opacity="0.47"/><circle cx="835.9" cy="426.8" r="0.66" fill="#e8d09a" opacity="0.72"/><circle cx="834.3" cy="434.3" r="0.86" fill="#e8d09a" opacity="0.62"/><circle cx="831.9" cy="446.9" r="0.58" fill="#e8d09a" opacity="0.37"/><circle cx="830.7" cy="451.7" r="0.89" fill="#e8d09a" opacity="0.37"/><circle cx="834.9" cy="437.0" r="0.91" fill="#e8d09a" opacity="0.36"/><circle cx="831.4" cy="443.1" r="0.98" fill="#e8d09a" opacity="0.58"/><circle cx="833.7" cy="438.2" r="0.74" fill="#e8d09a" opacity="0.58"/><circle cx="832.9" cy="432.0" r="0.60" fill="#e8d09a" opacity="0.67"/><circle cx="830.8" cy="440.9" r="0.68" fill="#e8d09a" opacity="0.82"/><circle cx="830.0" cy="449.7" r="0.71" fill="#e8d09a" opacity="0.50"/><circle cx="841.6" cy="410.9" r="0.72" fill="#e8d09a" opacity="0.37"/><circle cx="833.9" cy="428.2" r="0.50" fill="#e8d09a" opacity="0.79"/><circle cx="827.9" cy="445.4" r="0.74" fill="#e8d09a" opacity="0.78"/><circle cx="831.5" cy="437.5" r="0.51" fill="#e8d09a" opacity="0.58"/><circle cx="832.7" cy="415.9" r="0.55" fill="#e8d09a" opacity="0.62"/><circle cx="829.8" cy="445.7" r="0.59" fill="#e8d09a" opacity="0.42"/><circle cx="828.5" cy="431.8" r="0.57" fill="#e8d09a" opacity="0.54"/><circle cx="838.6" cy="410.5" r="0.62" fill="#e8d09a" opacity="0.33"/><circle cx="858.0" cy="395.7" r="0.59" fill="#e8d09a" opacity="0.22"/><circle cx="850.8" cy="398.0" r="0.76" fill="#e8d09a" opacity="0.45"/><circle cx="847.4" cy="397.6" r="0.71" fill="#e8d09a" opacity="0.29"/><circle cx="837.4" cy="404.9" r="0.73" fill="#e8d09a" opacity="0.27"/><circle cx="847.1" cy="404.5" r="0.61" fill="#e8d09a" opacity="0.35"/><circle cx="848.9" cy="402.4" r="0.69" fill="#e8d09a" opacity="0.56"/><circle cx="852.7" cy="401.5" r="0.70" fill="#e8d09a" opacity="0.22"/><circle cx="847.4" cy="398.1" r="0.64" fill="#e8d09a" opacity="0.42"/><circle cx="842.8" cy="397.2" r="0.57" fill="#e8d09a" opacity="0.43"/><circle cx="838.9" cy="403.0" r="0.58" fill="#e8d09a" opacity="0.38"/><circle cx="934.7" cy="393.3" r="0.60" fill="#e8d09a" opacity="0.29"/><circle cx="912.7" cy="381.1" r="0.58" fill="#e8d09a" opacity="0.27"/><circle cx="901.6" cy="392.5" r="0.45" fill="#e8d09a" opacity="0.37"/><circle cx="926.3" cy="395.7" r="0.60" fill="#e8d09a" opacity="0.22"/><circle cx="905.1" cy="390.0" r="0.69" fill="#e8d09a" opacity="0.51"/><circle cx="904.0" cy="391.8" r="0.60" fill="#e8d09a" opacity="0.35"/><circle cx="919.3" cy="391.0" r="0.74" fill="#e8d09a" opacity="0.60"/><circle cx="906.3" cy="380.5" r="0.48" fill="#e8d09a" opacity="0.59"/><circle cx="870.0" cy="392.8" r="0.77" fill="#e8d09a" opacity="0.27"/><circle cx="919.9" cy="378.0" r="0.43" fill="#e8d09a" opacity="0.34"/><circle cx="910.4" cy="388.3" r="0.76" fill="#e8d09a" opacity="0.31"/><circle cx="914.0" cy="388.8" r="0.60" fill="#e8d09a" opacity="0.57"/><circle cx="913.6" cy="396.8" r="0.60" fill="#e8d09a" opacity="0.33"/><circle cx="921.1" cy="392.9" r="0.46" fill="#e8d09a" opacity="0.57"/><circle cx="893.6" cy="379.9" r="0.47" fill="#e8d09a" opacity="0.51"/><circle cx="926.6" cy="397.1" r="0.65" fill="#e8d09a" opacity="0.34"/><circle cx="926.0" cy="386.3" r="0.63" fill="#e8d09a" opacity="0.55"/><circle cx="950.0" cy="404.1" r="0.65" fill="#e8d09a" opacity="0.36"/><circle cx="946.0" cy="499.6" r="0.90" fill="#e8d09a" opacity="0.59"/><circle cx="940.1" cy="514.4" r="0.62" fill="#e8d09a" opacity="0.39"/><circle cx="944.9" cy="502.7" r="0.81" fill="#e8d09a" opacity="0.43"/><circle cx="936.7" cy="489.1" r="0.69" fill="#e8d09a" opacity="0.63"/><circle cx="944.9" cy="505.4" r="0.42" fill="#e8d09a" opacity="0.37"/><circle cx="941.4" cy="499.9" r="0.66" fill="#e8d09a" opacity="0.75"/><circle cx="947.2" cy="508.8" r="0.73" fill="#e8d09a" opacity="0.31"/><circle cx="949.2" cy="505.1" r="0.45" fill="#e8d09a" opacity="0.48"/><circle cx="946.0" cy="514.4" r="0.69" fill="#e8d09a" opacity="0.40"/><circle cx="941.4" cy="499.3" r="0.47" fill="#e8d09a" opacity="0.77"/><circle cx="945.1" cy="509.1" r="0.45" fill="#e8d09a" opacity="0.62"/><circle cx="950.4" cy="495.9" r="0.60" fill="#e8d09a" opacity="0.43"/><circle cx="1021.0" cy="636.6" r="0.78" fill="#e8d09a" opacity="0.46"/><circle cx="1007.8" cy="631.4" r="0.97" fill="#e8d09a" opacity="0.69"/><circle cx="1012.1" cy="647.7" r="0.52" fill="#e8d09a" opacity="0.57"/><circle cx="1008.1" cy="638.2" r="0.53" fill="#e8d09a" opacity="0.72"/><circle cx="1019.9" cy="636.5" r="0.97" fill="#e8d09a" opacity="0.34"/><circle cx="1014.7" cy="643.0" r="0.75" fill="#e8d09a" opacity="0.63"/><circle cx="1013.5" cy="632.9" r="0.65" fill="#e8d09a" opacity="0.43"/><circle cx="1024.6" cy="639.4" r="0.89" fill="#e8d09a" opacity="0.68"/><circle cx="1024.1" cy="636.4" r="0.87" fill="#e8d09a" opacity="0.53"/><circle cx="1011.6" cy="630.1" r="0.61" fill="#e8d09a" opacity="0.31"/><circle cx="1012.2" cy="637.5" r="0.67" fill="#e8d09a" opacity="0.70"/><circle cx="1007.9" cy="626.2" r="0.86" fill="#e8d09a" opacity="0.41"/><circle cx="1005.6" cy="634.1" r="0.89" fill="#e8d09a" opacity="0.56"/><circle cx="1011.1" cy="643.7" r="0.98" fill="#e8d09a" opacity="0.38"/><circle cx="1012.8" cy="635.4" r="0.63" fill="#e8d09a" opacity="0.39"/><circle cx="1011.4" cy="624.0" r="0.87" fill="#e8d09a" opacity="0.45"/><circle cx="1016.1" cy="632.7" r="0.62" fill="#e8d09a" opacity="0.79"/><circle cx="1005.4" cy="629.9" r="0.83" fill="#e8d09a" opacity="0.84"/><circle cx="1000.2" cy="638.0" r="0.85" fill="#e8d09a" opacity="0.76"/><circle cx="1002.7" cy="639.3" r="0.79" fill="#e8d09a" opacity="0.43"/><circle cx="1014.1" cy="643.3" r="0.54" fill="#e8d09a" opacity="0.80"/><circle cx="1012.9" cy="637.0" r="0.55" fill="#e8d09a" opacity="0.81"/><circle cx="1010.0" cy="638.5" r="0.51" fill="#e8d09a" opacity="0.27"/><circle cx="1008.8" cy="628.8" r="0.85" fill="#e8d09a" opacity="0.69"/><circle cx="1019.7" cy="638.9" r="0.68" fill="#e8d09a" opacity="0.74"/><circle cx="1017.6" cy="625.7" r="0.53" fill="#e8d09a" opacity="0.77"/><circle cx="1025.0" cy="629.4" r="0.55" fill="#e8d09a" opacity="0.37"/><circle cx="1013.3" cy="636.9" r="0.92" fill="#e8d09a" opacity="0.74"/><circle cx="1004.2" cy="628.5" r="0.82" fill="#e8d09a" opacity="0.42"/><circle cx="1014.3" cy="637.4" r="0.88" fill="#e8d09a" opacity="0.37"/><circle cx="987.6" cy="624.3" r="0.41" fill="#e8d09a" opacity="0.30"/><circle cx="988.3" cy="627.0" r="0.55" fill="#e8d09a" opacity="0.33"/><circle cx="996.2" cy="618.8" r="0.74" fill="#e8d09a" opacity="0.45"/><circle cx="995.5" cy="620.9" r="0.57" fill="#e8d09a" opacity="0.51"/><circle cx="985.2" cy="625.8" r="0.62" fill="#e8d09a" opacity="0.29"/><circle cx="991.5" cy="618.5" r="0.73" fill="#e8d09a" opacity="0.27"/><circle cx="993.6" cy="620.0" r="0.70" fill="#e8d09a" opacity="0.59"/><circle cx="996.3" cy="620.1" r="0.60" fill="#e8d09a" opacity="0.52"/><circle cx="971.8" cy="569.0" r="0.74" fill="#f3ebc8" opacity="0.93"/><circle cx="967.8" cy="569.0" r="0.71" fill="#f3ebc8" opacity="0.69"/><circle cx="966.8" cy="567.1" r="0.64" fill="#f3ebc8" opacity="0.85"/><circle cx="978.5" cy="569.8" r="0.88" fill="#f3ebc8" opacity="0.91"/><circle cx="965.0" cy="567.1" r="0.76" fill="#f3ebc8" opacity="0.76"/><circle cx="971.1" cy="568.1" r="0.96" fill="#f3ebc8" opacity="0.61"/><circle cx="970.3" cy="568.6" r="0.96" fill="#f3ebc8" opacity="0.80"/><circle cx="959.5" cy="567.4" r="0.69" fill="#f3ebc8" opacity="0.78"/><circle cx="958.8" cy="566.4" r="0.90" fill="#f3ebc8" opacity="0.86"/><circle cx="965.7" cy="567.9" r="0.66" fill="#f3ebc8" opacity="0.94"/><circle cx="963.7" cy="566.5" r="0.67" fill="#f3ebc8" opacity="0.78"/><circle cx="970.3" cy="567.5" r="0.65" fill="#f3ebc8" opacity="0.78"/><circle cx="972.5" cy="568.2" r="0.68" fill="#f3ebc8" opacity="0.72"/><circle cx="965.7" cy="566.5" r="0.66" fill="#f3ebc8" opacity="0.66"/><circle cx="969.0" cy="568.5" r="0.81" fill="#f3ebc8" opacity="0.66"/><circle cx="967.1" cy="568.0" r="0.99" fill="#f3ebc8" opacity="0.89"/><circle cx="981.7" cy="570.6" r="0.64" fill="#f3ebc8" opacity="0.75"/><circle cx="980.1" cy="569.5" r="0.89" fill="#f3ebc8" opacity="0.77"/></g>
 <circle cx="954.4" cy="511.0" r="168.4" fill="url(#eShade)"/>
 <circle cx="954.4" cy="511.0" r="168.4" fill="url(#eLimb)"/>
 <circle cx="954.4" cy="511.0" r="167.4" fill="url(#eAtm)" mask="url(#mAtm)"/>
</g>
</svg>

<!-- bottom row -->
<div class="abs" style="left:222px;top:768px;width:502.5px;height:23.5px;background:#fff;box-shadow:0 0.7px 0.3px rgba(0,0,0,.26),0 0 0 0.5px rgba(0,0,0,.02)"></div>
<svg class="abs" style="left:804px;top:770.5px" width="20" height="18" viewBox="0 0 20 18">
<defs><linearGradient id="fg804" x1="0" y1="0" x2="0" y2="1"><stop offset="0" stop-color="#7ccdf7"/><stop offset="1" stop-color="#56b2ee"/></linearGradient></defs>
<path d="M1 2.4 Q1 0.8 2.6 0.8 H6.6 Q7.6 0.8 8.2 1.6 L9 2.8 H17.4 Q19 2.8 19 4.4 V7 H1 Z" fill="#48a4e6"/>
<rect x="1" y="4.2" width="18" height="13" rx="1.6" fill="url(#fg804)"/>
<path d="M6.6 11.2 L10 8.2 L13.4 11.2 M7.6 10.6 V14 H12.4 V10.6" fill="none" stroke="#4a9fe0" stroke-width="1.1" stroke-linejoin="round"/>
</svg>
<svg class="abs" style="left:953.6px;top:770.5px" width="20" height="18" viewBox="0 0 20 18">
<defs><linearGradient id="fg953" x1="0" y1="0" x2="0" y2="1"><stop offset="0" stop-color="#7ccdf7"/><stop offset="1" stop-color="#56b2ee"/></linearGradient></defs>
<path d="M1 2.4 Q1 0.8 2.6 0.8 H6.6 Q7.6 0.8 8.2 1.6 L9 2.8 H17.4 Q19 2.8 19 4.4 V7 H1 Z" fill="#48a4e6"/>
<rect x="1" y="4.2" width="18" height="13" rx="1.6" fill="url(#fg953)"/>
<rect x="6.4" y="8" width="7.2" height="6.4" rx="0.8" fill="none" stroke="#4a9fe0" stroke-width="1.1"/><path d="M8.2 8 V14.4 M11.8 8 V14.4 M8.2 11.2 H11.8" stroke="#4a9fe0" stroke-width="0.9" fill="none"/>
</svg>
<svg class="abs" style="left:936px;top:772px" width="10" height="16" viewBox="936 772 10 16"><path d="M939 775.6 L943 779.8 L939 784" fill="none" stroke="#666" stroke-width="1.6" stroke-linecap="round" stroke-linejoin="round"/></svg>
<div class="btn" style="left:1275.5px;top:768px;width:93px;height:23px"></div>

<div id="txt" style="position:absolute;left:0;top:0;width:1500px;height:844px;will-change:transform">
<div class="t" style="left:123.0px;top:84px;line-height:21px;letter-spacing:0.511px;color:#676767;">Open Source</div>
<div class="t" style="left:279.0px;top:84px;line-height:21px;letter-spacing:0.498px;color:#676767;">Add To Queue</div>
<div class="t" style="left:468.0px;top:84px;line-height:21px;letter-spacing:1.006px;color:#676767;">Start</div>
<div class="t" style="left:560.5px;top:84px;line-height:21px;letter-spacing:0.101px;color:#b9b9b9;">Pause</div>
<div class="t" style="left:1097.9px;top:84px;line-height:21px;letter-spacing:0.540px;color:#676767;">Presets</div>
<div class="t" style="left:1175.9px;top:84px;line-height:21px;letter-spacing:0.535px;color:#676767;">Preview</div>
<div class="t" style="left:1256.0px;top:84px;line-height:21px;letter-spacing:0.616px;color:#676767;">Queue</div>
<div class="t" style="left:1327.3px;top:84px;line-height:21px;letter-spacing:0.953px;color:#676767;">Activity</div>
<div class="t" style="left:601.6px;top:14px;line-height:25px;font-size:19px;font-weight:700;-webkit-text-stroke-width:0.12px;letter-spacing:0.617px;color:#3c3c3c;">file_example_AVI_1920_2_3MG.avi</div>
<div class="t" style="left:139.2px;top:132px;line-height:21px;font-weight:700;-webkit-text-stroke-width:0.12px;letter-spacing:0.579px;color:#222;">Source:</div>
<div class="t" style="left:214.3px;top:132px;line-height:21px;letter-spacing:0.394px;color:#262626;">file_example_AVI_1920_2_3MG,</div>
<div class="t" style="left:462.2px;top:132px;line-height:21px;letter-spacing:-0.020px;color:#262626;">1920x1080,</div>
<div class="t" style="left:554.9px;top:132px;line-height:21px;letter-spacing:0.054px;color:#262626;">30 FPS,</div>
<div class="t" style="left:618.7px;top:132px;line-height:21px;letter-spacing:-0.730px;color:#262626;">SDR</div>
<div class="t" style="left:656.6px;top:132px;line-height:21px;letter-spacing:1.160px;color:#262626;">(8-bit</div>
<div class="t" style="left:704.7px;top:132px;line-height:21px;letter-spacing:0.834px;color:#262626;">4:2:0,</div>
<div class="t" style="left:754.1px;top:132px;line-height:21px;letter-spacing:-0.105px;color:#262626;">1-1-1),</div>
<div class="t" style="left:806.6px;top:132px;line-height:21px;letter-spacing:0.487px;color:#262626;">1 audio track</div>
<div class="t" style="left:139.5px;top:172px;line-height:21px;font-weight:700;-webkit-text-stroke-width:0.12px;letter-spacing:0.869px;color:#222;">Title:</div>
<div class="t" style="left:201.2px;top:172px;line-height:21px;color:#262626;">2</div>
<div class="t" style="left:216.0px;top:172px;line-height:21px;color:#262626;transform:scaleX(1.3);transform-origin:0 0;">-</div>
<div class="t" style="left:228.2px;top:172px;line-height:21px;letter-spacing:1.157px;color:#262626;">00:00:30</div>
<div class="t" style="left:303.1px;top:172px;line-height:21px;color:#262626;transform:scaleX(1.3);transform-origin:0 0;">-</div>
<div class="t" style="left:315.8px;top:172px;line-height:21px;letter-spacing:0.466px;color:#262626;">file_example_AVI_1920_2_3MG</div>
<div class="t" style="left:658.6px;top:172px;line-height:21px;font-weight:700;-webkit-text-stroke-width:0.12px;letter-spacing:0.529px;color:#222;">Angle:</div>
<div class="t" style="left:732.0px;top:172px;line-height:21px;color:#262626;">1</div>
<div class="t" style="left:799.9px;top:172px;line-height:21px;font-weight:700;-webkit-text-stroke-width:0.12px;letter-spacing:0.631px;color:#222;">Range:</div>
<div class="t" style="left:877.2px;top:172px;line-height:21px;letter-spacing:0.727px;color:#262626;">Chapters</div>
<div class="t" style="left:1002.0px;top:172px;line-height:21px;color:#262626;">1</div>
<div class="t" style="left:1086.1px;top:172px;line-height:21px;color:#262626;">–</div>
<div class="t" style="left:1112.9px;top:172px;line-height:21px;color:#262626;">1</div>
<div class="t" style="left:1209.8px;top:172px;line-height:21px;font-weight:700;-webkit-text-stroke-width:0.12px;letter-spacing:0.737px;color:#222;">Duration:</div>
<div class="t" style="left:1292.3px;top:172px;line-height:21px;letter-spacing:1.329px;color:#262626;">00:00:30</div>
<div class="t" style="left:139.0px;top:215px;line-height:21px;font-weight:700;-webkit-text-stroke-width:0.12px;letter-spacing:0.873px;color:#222;">Preset:</div>
<div class="t" style="left:217.7px;top:215px;line-height:21px;letter-spacing:0.743px;color:#262626;">Fast 1080p30</div>
<div class="t" style="left:528.9px;top:215px;line-height:21px;letter-spacing:0.607px;color:#262626;">Reload</div>
<div class="t" style="left:617.4px;top:215px;line-height:21px;letter-spacing:0.369px;color:#262626;">Save New Preset...</div>
<div class="t" style="left:448.9px;top:260px;line-height:21px;letter-spacing:0.718px;color:#262626;">Summary</div>
<div class="t" style="left:550.5px;top:260px;line-height:21px;letter-spacing:0.585px;color:#262626;">Dimensions</div>
<div class="t" style="left:667.4px;top:260px;line-height:21px;letter-spacing:0.681px;color:#262626;">Filters</div>
<div class="t" style="left:745.9px;top:260px;line-height:21px;letter-spacing:0.569px;color:#262626;">Video</div>
<div class="t" style="left:818.9px;top:260px;line-height:21px;letter-spacing:0.598px;color:#262626;">Audio</div>
<div class="t" style="left:890.8px;top:260px;line-height:21px;letter-spacing:0.851px;color:#262626;">Subtitles</div>
<div class="t" style="left:988.2px;top:260px;line-height:21px;letter-spacing:0.784px;color:#262626;">Chapters</div>
<div class="t" style="left:172.7px;top:311px;line-height:21px;letter-spacing:0.580px;color:#262626;">Format:</div>
<div class="t" style="left:251.5px;top:311px;line-height:21px;letter-spacing:0.658px;color:#262626;">MP4</div>
<div class="t" style="left:266.6px;top:341px;line-height:21px;letter-spacing:0.614px;color:#262626;">Passthru Common Metadata</div>
<div class="t" style="left:266.3px;top:370px;line-height:21px;letter-spacing:0.716px;color:#262626;">Web Optimized</div>
<div class="t" style="left:266.5px;top:399px;line-height:21px;letter-spacing:0.581px;color:#262626;">Align A/V Start</div>
<div class="t" style="left:266.7px;top:428px;line-height:21px;letter-spacing:0.643px;color:#262626;">iPod 5G Support</div>
<div class="t" style="left:175.9px;top:468px;line-height:21px;letter-spacing:0.633px;color:#262626;">Tracks:</div>
<div class="t" style="left:242.4px;top:468px;line-height:21px;letter-spacing:0.545px;color:#262626;">H.264 (x264), 30 FPS PFR</div>
<div class="t" style="left:243.0px;top:488px;line-height:21px;letter-spacing:0.562px;color:#262626;">0: AAC (CoreAudio), Stereo</div>
<div class="t" style="left:178.4px;top:527px;line-height:21px;letter-spacing:0.671px;color:#262626;">Filters:</div>
<div class="t" style="left:242.7px;top:527px;line-height:21px;letter-spacing:0.756px;color:#262626;">Comb Detect, Decomb</div>
<div class="t" style="left:193.4px;top:566px;line-height:21px;letter-spacing:0.594px;color:#262626;">Size:</div>
<div class="t" style="left:242.4px;top:566px;line-height:21px;letter-spacing:0.739px;color:#262626;">1920x1080</div>
<div class="t" style="left:139.2px;top:769px;line-height:21px;font-weight:700;-webkit-text-stroke-width:0.12px;letter-spacing:0.392px;color:#222;">Save As:</div>
<div class="t" style="left:226.4px;top:769px;line-height:21px;letter-spacing:0.513px;color:#262626;">file_example_AVI_1920_2_3MG.mp4</div>
<div class="t" style="left:756.0px;top:769px;line-height:21px;font-weight:700;-webkit-text-stroke-width:0.12px;letter-spacing:0.655px;color:#222;">To:</div>
<div class="t" style="left:830.2px;top:769px;line-height:21px;letter-spacing:0.494px;color:#6c6c6c;">gauravshukla</div>
<div class="t" style="left:979.4px;top:769px;line-height:21px;letter-spacing:0.551px;color:#6c6c6c;">Movies</div>
<div class="t" style="left:1286.5px;top:769px;line-height:21px;letter-spacing:0.395px;color:#262626;">Browse...</div>
</div>
</body></html>
